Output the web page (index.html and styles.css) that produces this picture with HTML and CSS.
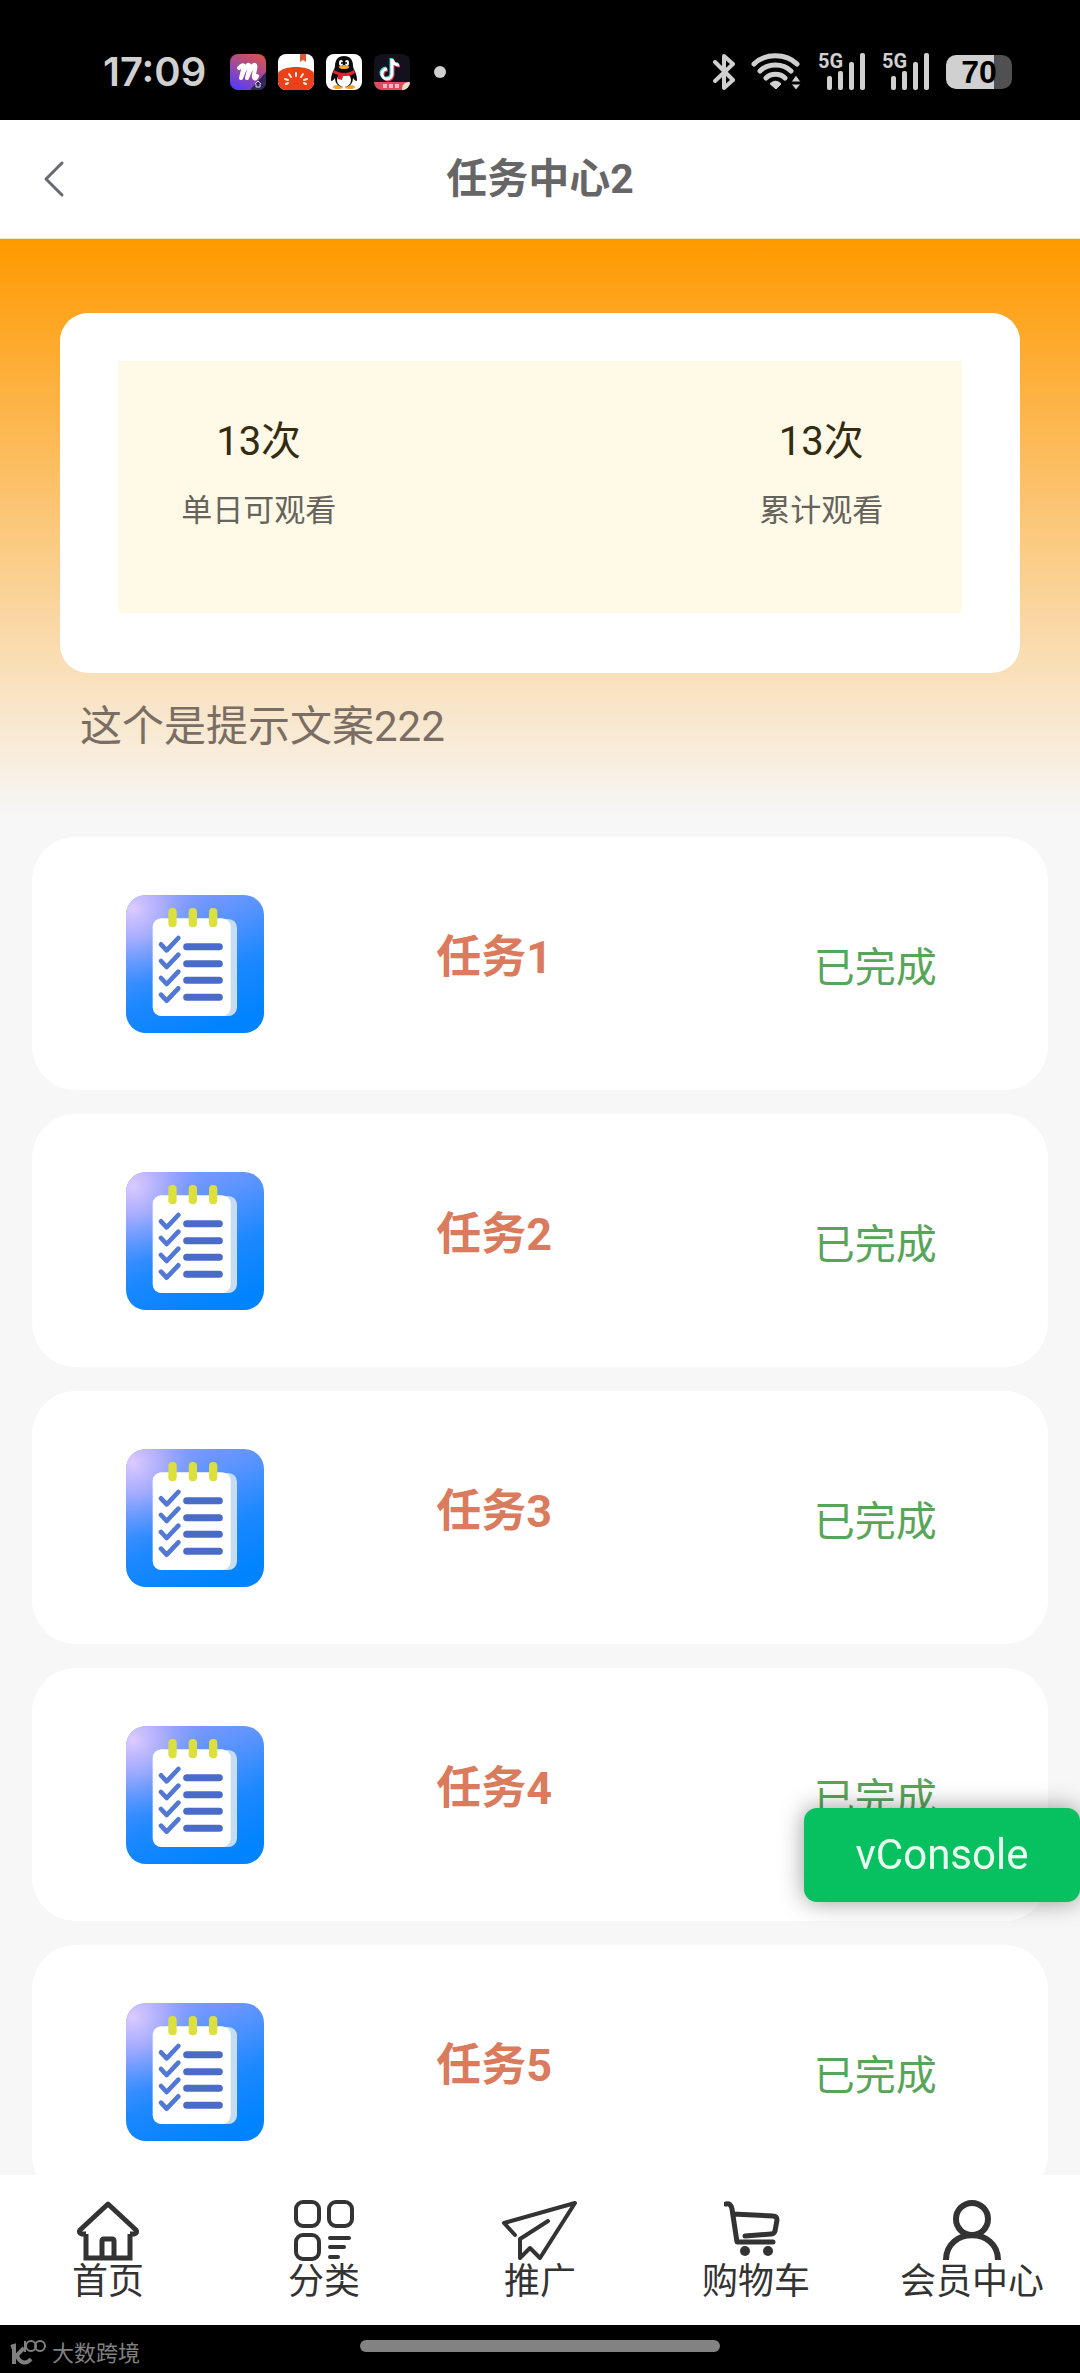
FILE: index.html
```html
<!DOCTYPE html>
<html lang="zh-CN">
<head>
<meta charset="utf-8">
<meta name="viewport" content="width=device-width, initial-scale=1">
<title>任务中心2</title>
<link rel="stylesheet" href="styles.css">
</head>
<body>
<svg class="defs" aria-hidden="true">
  <defs>
    <linearGradient id="tile" x1="0.2" y1="0" x2="0.6" y2="1">
      <stop offset="0" stop-color="#8c98fb"/>
      <stop offset="0.3" stop-color="#5c94ff"/>
      <stop offset="0.65" stop-color="#1c88ff"/>
      <stop offset="1" stop-color="#0083ff"/>
    </linearGradient>
    <radialGradient id="glow" cx="0.05" cy="0.1" r="0.55">
      <stop offset="0" stop-color="#dccbff"/>
      <stop offset="0.4" stop-color="#b9b4fd" stop-opacity="0.75"/>
      <stop offset="1" stop-color="#6a9bff" stop-opacity="0"/>
    </radialGradient>
    <linearGradient id="mgrad" x1="0.8" y1="0" x2="0.3" y2="1">
      <stop offset="0" stop-color="#d8524c"/>
      <stop offset="0.5" stop-color="#a04c9c"/>
      <stop offset="1" stop-color="#5a3cf0"/>
    </linearGradient>
    <symbol id="checklist" viewBox="0 0 414 414">
      <rect width="414" height="414" rx="60" fill="url(#tile)"/>
      <rect width="414" height="414" rx="60" fill="url(#glow)"/>
      <rect x="120" y="72" width="213" height="291" rx="26" fill="#c6dcf0"/>
      <rect x="80" y="70" width="234" height="293" rx="26" fill="#fff"/>
      <g fill="#dce03c">
        <rect x="127" y="39" width="25" height="58" rx="12"/>
        <rect x="188" y="39" width="25" height="58" rx="12"/>
        <rect x="249" y="39" width="25" height="58" rx="12"/>
      </g>
      <g fill="none" stroke="#5078d4" stroke-width="14" stroke-linecap="round" stroke-linejoin="round">
        <path d="M105 148l17 18 35-37M105 198l17 18 35-37M105 249l17 18 35-37M105 299l17 18 35-37"/>
        <path d="M182 155h98M182 206h98M182 256h98M182 307h98" stroke="#4a6bc8" stroke-width="21"/>
      </g>
    </symbol>
    <symbol id="signal" viewBox="0 0 48 38">
      <text x="0" y="15" class="net">5G</text>
      <g fill="#d0d0d0">
        <rect x="9" y="23" width="5" height="14" rx="2"/>
        <rect x="20" y="18" width="5" height="19" rx="2"/>
        <rect x="31" y="9" width="5" height="28" rx="2"/>
        <rect x="42" y="0" width="5" height="37" rx="2"/>
      </g>
    </symbol>
  </defs>
</svg>

<div class="app">
  <div class="statusbar">
    <div class="status-left">
      <span class="clock">17:09</span>
      <svg class="app-icon" viewBox="0 0 36 36">
        <rect width="36" height="36" rx="8" fill="url(#mgrad)"/>
        <path d="M36 18v10a8 8 0 0 1-8 8h-8z" fill="#33265c"/>
        <path d="M9 14c3-4 6-4 4 2l-2 8c3-8 6-14 8-13s-1 8-2 13c3-8 6-14 8-13s-2 9-1 12 2 1 3-1" fill="none" stroke="#fff" stroke-width="4" stroke-linecap="round" stroke-linejoin="round"/>
        <path d="M25 30l3-3 3 3M26 30v3h4v-3" fill="none" stroke="#ddd" stroke-width="1"/>
      </svg>
      <svg class="app-icon" viewBox="0 0 36 36">
        <rect width="36" height="36" rx="8" fill="#fff"/>
        <path d="M22 0h6v8l-3-2-3 2z" fill="#dc5a34"/>
        <path d="M0 19c5-8 31-8 36 0v9a8 8 0 0 1-8 8H8a8 8 0 0 1-8-8z" fill="#e8421a"/>
        <path d="M18 19v3M11 20l2 3M25 20l-2 3M7 25l3 1M29 25l-3 1M8 30l2-1M28 30l-2-1" stroke="#ffe9d8" stroke-width="2" stroke-linecap="round"/>
      </svg>
      <svg class="app-icon" viewBox="0 0 36 36">
        <rect width="36" height="36" rx="8" fill="#fff"/>
        <ellipse cx="12" cy="33" rx="5" ry="2" fill="#f2a32c"/><ellipse cx="24" cy="33" rx="5" ry="2" fill="#f2a32c"/>
        <path d="M18 2c-6 0-9 4-9 10 0 3-4 7-4 14 0 2 2 1 4-2 0 6 4 9 9 9s9-3 9-9c2 3 4 4 4 2 0-7-4-11-4-14 0-6-3-10-9-10z" fill="#0b0b0b"/>
        <ellipse cx="18" cy="26" rx="7" ry="7" fill="#fff"/>
        <ellipse cx="15" cy="9" rx="2" ry="3" fill="#fff"/><ellipse cx="21" cy="9" rx="2" ry="3" fill="#fff"/>
        <circle cx="16" cy="9" r="1" fill="#000"/><circle cx="20" cy="9" r="1" fill="#000"/>
        <ellipse cx="18" cy="13" rx="5" ry="2" fill="#f2a32c"/>
        <path d="M8 16c6 4 14 4 20 0l1 3c-4 3-8 3-12 3l-1 4-4-1v-4l-5-2z" fill="#df2430"/>
      </svg>
      <svg class="app-icon" viewBox="0 0 36 36">
        <rect width="36" height="36" rx="8" fill="#11121c"/>
        <path d="M18 5v15a5 5 0 1 1-5-5M18 5c1 4 3 6 7 6" fill="none" stroke="#37d8dc" stroke-width="3" transform="translate(-1 -1)"/>
        <path d="M18 5v15a5 5 0 1 1-5-5M18 5c1 4 3 6 7 6" fill="none" stroke="#ec3a5e" stroke-width="3" transform="translate(1 1)"/>
        <path d="M18 5v15a5 5 0 1 1-5-5M18 5c1 4 3 6 7 6" fill="none" stroke="#fff" stroke-width="3"/>
        <path d="M0 28h36a8 8 0 0 1-8 8H8a8 8 0 0 1-8-8z" fill="#e34a62"/>
        <path d="M9 32h4M15 32h4M21 32h4" stroke="#f7b9c0" stroke-width="4"/>
        <path d="M28 36c0-5 2-8 8-8a8 8 0 0 1-8 8z" fill="#f3dccb"/>
      </svg>
      <span class="dot"></span>
    </div>
    <div class="status-right">
      <svg class="bt" viewBox="0 0 22 38"><path d="M2 9l18 18-9 8V3l9 8L2 28" fill="none" stroke="#d0d0d0" stroke-width="4" stroke-linejoin="round" stroke-linecap="round"/></svg>
      <svg class="wifi" viewBox="0 0 51 38">
        <g fill="none" stroke="#d0d0d0" stroke-width="5" stroke-linecap="round"><path d="M3 11c11-11 32-11 43 0M9 18c8-8 23-8 31 0M15 25c5-5 14-5 19 0"/></g>
        <path d="M18 31c4-5 9-5 13 0l-6 6zM40 29l5-7 5 7zM40 31h10l-5 6z" fill="#d0d0d0" stroke="#000" stroke-width="1"/>
      </svg>
      <svg class="sig" role="img" aria-label="5G"><use href="#signal"/></svg>
      <svg class="sig" role="img" aria-label="5G"><use href="#signal"/></svg>
      <div class="battery"><span>70</span></div>
    </div>
  </div>

  <header class="navbar">
    <button class="back" type="button" aria-label="返回">
      <svg viewBox="0 0 22 38"><path d="M19 3L3 19l16 16" fill="none" stroke="#666970" stroke-width="3" stroke-linecap="round" stroke-linejoin="round"/></svg>
    </button>
    <h1>任务中心2</h1>
  </header>

  <main class="content">
    <section class="hero">
      <div class="summary">
        <dl class="stats">
          <div class="stat"><dd>13次</dd><dt>单日可观看</dt></div>
          <div class="stat"><dd>13次</dd><dt>累计观看</dt></div>
        </dl>
      </div>
      <p class="hint">这个是提示文案222</p>
    </section>
    <ul class="tasks">
      <li class="task"><div class="task-icon"><svg><use href="#checklist"/></svg></div><h2>任务1</h2><span class="state">已完成</span></li>
      <li class="task"><div class="task-icon"><svg><use href="#checklist"/></svg></div><h2>任务2</h2><span class="state">已完成</span></li>
      <li class="task"><div class="task-icon"><svg><use href="#checklist"/></svg></div><h2>任务3</h2><span class="state">已完成</span></li>
      <li class="task"><div class="task-icon"><svg><use href="#checklist"/></svg></div><h2>任务4</h2><span class="state">已完成</span></li>
      <li class="task"><div class="task-icon"><svg><use href="#checklist"/></svg></div><h2>任务5</h2><span class="state">已完成</span></li>
    </ul>
  </main>

  <nav class="tabbar">
    <a href="#home">
      <svg viewBox="0 0 64 62"><g fill="none" stroke="#333" stroke-width="5"><path d="M10 34v24h44V34" /><path d="M10 34H6q-4-1-2-4L32 4l28 26q2 3-2 4h-4" stroke-linejoin="round"/><path d="M26 57V41q0-2 2-2h8q2 0 2 2v16"/></g></svg>
      <span>首页</span>
    </a>
    <a href="#category">
      <svg viewBox="0 0 64 62"><g fill="none" stroke="#333" stroke-width="4"><rect x="4" y="2" width="23" height="24" rx="7"/><rect x="37" y="2" width="23" height="24" rx="7"/><rect x="4" y="35" width="23" height="24" rx="7"/><path d="M38 38h19M38 47h14M38 57h8" stroke-linecap="round"/></g></svg>
      <span>分类</span>
    </a>
    <a href="#promote">
      <svg class="wide" viewBox="0 0 76 62"><g fill="none" stroke="#333" stroke-width="4" stroke-linecap="round" stroke-linejoin="round"><path d="M13 35L2 23 73 3 38 58 28 48 18 58V39L46 21"/></g></svg>
      <span>推广</span>
    </a>
    <a href="#cart">
      <svg viewBox="0 0 64 62"><g fill="none" stroke="#333" stroke-width="5" stroke-linecap="round" stroke-linejoin="round"><path d="M2 4q5-1 6 5l5 33h36M9 14l40 2q4 0 4 4l-2 11q-1 3-4 3l-26 2"/></g><circle cx="21" cy="51" r="5" fill="#333"/><circle cx="44" cy="51" r="5" fill="#333"/></svg>
      <span>购物车</span>
    </a>
    <a href="#member">
      <svg viewBox="0 0 64 62"><g fill="none" stroke="#333" stroke-width="6"><circle cx="32" cy="19" r="16"/><path d="M6 60c0-33 52-33 52 0"/></g></svg>
      <span>会员中心</span>
    </a>
  </nav>

  <footer class="gesture">
    <div class="brand">
      <svg viewBox="0 0 36 26"><g fill="none" stroke="#808080"><path d="M1 7l3-1v18M14 8L7 15c2 8 9 10 14 4" stroke-width="4"/><path d="M14 2h1v10" stroke-width="2"/><circle cx="21" cy="6" r="5" stroke-width="2"/><circle cx="30" cy="6" r="5" stroke-width="2"/></g></svg>
      <span>大数跨境</span>
    </div>
    <div class="handle"></div>
  </footer>
</div>
<button class="vconsole" type="button">vConsole</button>
</body>
</html>
```
FILE: styles.css
```css
* {
  box-sizing: border-box;
  margin: 0;
  padding: 0;
}

body {
  background: #f7f7f7;
  color: #333;
  font-family: Roboto, "Noto Sans CJK SC", sans-serif;
}

svg {
  display: block;
}

button {
  border: 0;
  background: none;
  font: inherit;
}

.defs {
  position: absolute;
  width: 0;
  height: 0;
}

.app {
  display: flex;
  flex-direction: column;
  height: 100vh;
}

/* Status bar */
.statusbar {
  display: flex;
  flex: none;
  align-items: center;
  justify-content: space-between;
  height: 120px;
  padding: 24px 68px 0 103px;
  background: #000;
  color: #d0d0d0;
}

.status-left,
.status-right {
  display: flex;
  align-items: center;
}

.status-left {
  gap: 12px;
}

.clock {
  width: 115px;
  font: 600 40px/40px Inter, sans-serif;
}

.app-icon {
  width: 36px;
  height: 36px;
}

.dot {
  width: 12px;
  height: 12px;
  margin-left: 12px;
  border-radius: 50%;
  background: #d0d0d0;
}

.status-right {
  gap: 16px;
}

.bt {
  width: 22px;
  height: 38px;
}

.wifi {
  width: 51px;
  height: 38px;
}

.sig {
  width: 48px;
  height: 38px;
}

.net {
  fill: #d0d0d0;
  font: 700 20px Roboto, sans-serif;
}

.battery {
  width: 66px;
  height: 34px;
  border-radius: 10px;
  background: linear-gradient(90deg, #d0d0d0 72%, #505050 72%);
  color: #000;
  font: 600 32px/34px "Liberation Sans", sans-serif;
  text-align: center;
}

/* Page header */
.navbar {
  display: grid;
  flex: none;
  grid-template-columns: 108px 1fr 108px;
  align-items: center;
  height: 119px;
  border-bottom: 1px solid #f8e6cc;
  background: #fff;
}

.navbar h1 {
  color: #666;
  font-size: 41px;
  line-height: 60px;
  text-align: center;
}

.back {
  display: flex;
  justify-content: center;
}

.back svg {
  width: 22px;
  height: 38px;
}

.content {
  flex: 1;
  min-height: 0;
  overflow: hidden;
}

/* Summary */
.hero {
  padding: 74px 60px 60px;
  background: linear-gradient(#ff9900, #f7f7f7);
}

.summary {
  padding: 48px 58px 60px;
  border-radius: 28px;
  background: #fff;
}

.stats {
  display: flex;
  justify-content: space-between;
  padding: 50px 0 78px;
  background: #fff9e7;
  text-align: center;
}

.stat {
  width: 33.33%;
}

.stat dd {
  color: #332c10;
  font-size: 40px;
  line-height: 62px;
}

.stat dt {
  margin-top: 14px;
  color: #66635c;
  font-size: 31px;
  line-height: 48px;
}

.hint {
  margin: 24px 20px 0;
  color: #7a6e64;
  font-size: 42px;
  line-height: 60px;
}

/* Task list */
.tasks {
  display: flex;
  flex-direction: column;
  gap: 24px;
  padding: 20px 32px;
  list-style: none;
}

.task {
  display: flex;
  align-items: center;
  height: 253px;
  border-radius: 44px;
  background: #fff;
}

.task-icon {
  display: flex;
  justify-content: center;
  width: 32%;
}

.task-icon svg {
  width: 138px;
  height: 138px;
}

.task h2 {
  width: 27%;
  padding-bottom: 12px;
  color: #db7b5e;
  font-size: 45px;
  line-height: 60px;
  text-align: center;
}

.state {
  width: 34%;
  margin-left: auto;
  padding-top: 8px;
  color: #58a55a;
  font-size: 41px;
  line-height: 60px;
  text-align: center;
}

/* Bottom tabs */
.tabbar {
  display: flex;
  flex: none;
  height: 150px;
  padding-top: 25px;
  background: #fff;
}

.tabbar a {
  display: flex;
  flex: 1;
  flex-direction: column;
  align-items: center;
  color: #333;
  font-size: 36px;
  line-height: 40px;
  text-decoration: none;
}

.tabbar svg {
  width: 64px;
  height: 62px;
}

.tabbar .wide {
  width: 76px;
}

.gesture {
  display: grid;
  flex: none;
  grid-template-columns: 1fr 1fr 1fr;
  height: 48px;
  padding-top: 15px;
  background: #000;
}

.handle {
  height: 12px;
  border-radius: 6px;
  background: #828282;
}

.brand {
  display: flex;
  gap: 6px;
  padding-left: 10px;
  color: #808080;
  font-size: 22px;
  line-height: 28px;
}

.brand svg {
  width: 36px;
  height: 26px;
}

/* Floating debug switch */
.vconsole {
  position: fixed;
  right: 0;
  bottom: 471px;
  width: 276px;
  height: 94px;
  border-radius: 13px;
  background: #07c160;
  box-shadow: 0 0 24px rgba(0, 0, 0, 0.4);
  color: #e8fff0;
  font-size: 42px;
  line-height: 60px;
}
```
